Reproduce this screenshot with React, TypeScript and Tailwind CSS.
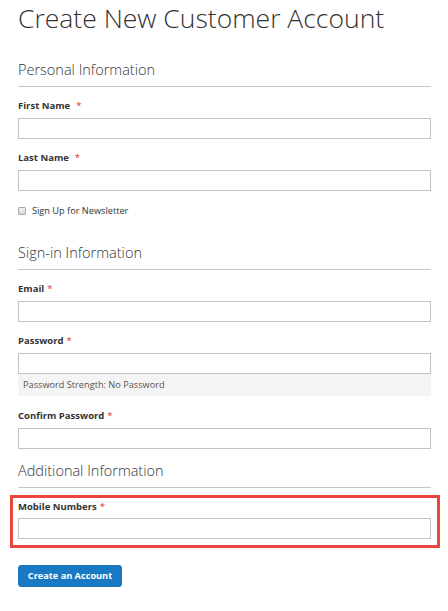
import React from "react";

const font = { fontFamily: '"Open Sans", "Noto Sans", sans-serif' };

function Label({ text, wide }: { text: string; wide?: boolean }) {
  return (
    <div className="text-[9.5px] leading-[14px] font-bold text-[#333] mb-[5px]">
      {text}
      <span className={`text-[#e02b27] font-normal ${wide ? "ml-[6px]" : "ml-[3px]"}`}>*</span>
    </div>
  );
}

function Input() {
  return <div className="h-[21px] border border-[#c2c2c2] bg-white" />;
}

function Heading({ text, mt }: { text: string; mt: string }) {
  return (
    <div className={`${mt} text-[14.5px] leading-[20px] font-light text-[#333] pb-[6px] border-b border-[#c6c6c6]`}>
      {text}
    </div>
  );
}

export default function App() {
  return (
    <div style={font} className="w-[448px] min-h-[611px] bg-white pl-[18px] pr-[17px] text-[#333]">
      <h1 className="text-[26.5px] leading-[36px] font-light text-[#333]">Create New Customer Account</h1>

      <Heading text="Personal Information" mt="mt-[24px]" />
      <div className="mt-[12px]">
        <div className="mb-[12px]">
          <Label text="First Name" wide />
          <Input />
        </div>
        <div className="mb-[12px]">
          <Label text="Last Name" wide />
          <Input />
        </div>
        <div className="mt-[13px] flex items-center h-[14px] text-[9.2px] text-[#333]">
          <span className="inline-block w-[8px] h-[8px] rounded-[1px] border border-[#a9a9a9] bg-gradient-to-b from-[#f2f2f2] to-[#d8d8d8] mr-[6px]" />
          Sign Up for Newsletter
        </div>
      </div>

      <Heading text="Sign-in Information" mt="mt-[25px]" />
      <div className="mt-[12px]">
        <div className="mb-[12px]">
          <Label text="Email" />
          <Input />
        </div>
        <div>
          <Label text="Password" />
          <Input />
          <div className="h-[22px] bg-[#f4f4f4] pl-[5px] flex items-center text-[9.2px] text-[#555]">
            Password Strength: No Password
          </div>
        </div>
        <div className="mt-[13px]">
          <Label text="Confirm Password" />
          <Input />
        </div>
      </div>

      <Heading text="Additional Information" mt="mt-[12px]" />
      <div className="mt-[7px] -ml-[8px] -mr-[9px] border-[3px] border-[#e8463f] pt-[2px] pb-[6px] pl-[5px] pr-[6px]">
        <div className="text-[9.5px] leading-[14px] font-bold text-[#333] mb-[4px]">
          Mobile Numbers<span className="text-[#e02b27] font-normal ml-[3px]">*</span>
        </div>
        <Input />
      </div>

      <button className="mt-[17px] h-[22px] w-[104px] rounded-[3px] bg-[#1979c3] border border-[#1979c3] text-white text-[9.2px] font-bold">
        Create an Account
      </button>
    </div>
  );
}
